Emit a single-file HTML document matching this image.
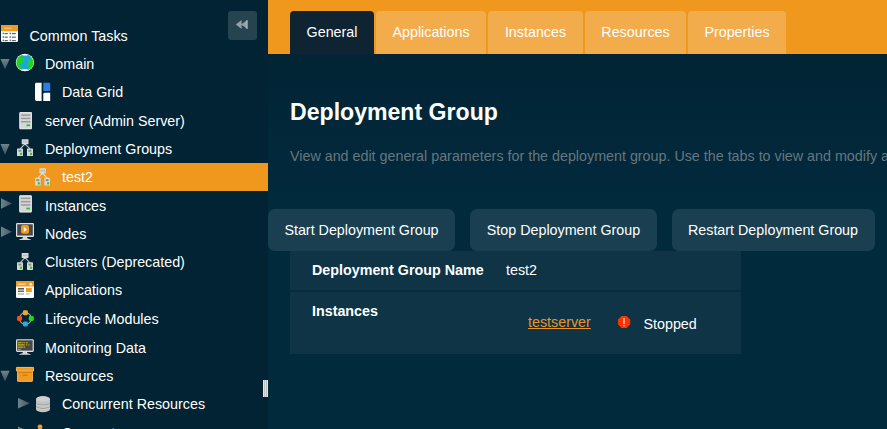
<!DOCTYPE html>
<html><head><meta charset="utf-8">
<style>
html,body{margin:0;padding:0}
body{width:887px;height:429px;overflow:hidden;position:relative;background:#012a3d;font-family:"Liberation Sans",sans-serif;font-size:14.3px;color:#fff}
#side{position:absolute;left:0;top:0;width:268px;height:429px;background:#022333;overflow:hidden}
.row{position:absolute;left:0;width:268px;height:28px;line-height:28px;white-space:nowrap}
#selbg{position:absolute;left:0;top:163px;width:268px;height:28px;background:#f0981e}
.row .t{position:absolute;top:0}
.arr{position:absolute;width:0;height:0}
.arr.d{border-left:5px solid transparent;border-right:5px solid transparent;border-top:9px solid #6d7f88}
.arr.r{border-top:5px solid transparent;border-bottom:5px solid transparent;border-left:9px solid #6d7f88}
.ico{position:absolute}
#collapse{position:absolute;left:228px;top:11px;width:29px;height:29px;background:#264350;border-radius:3px}
#grad{position:absolute;left:268px;top:54px;width:619px;height:150px;background:linear-gradient(180deg,#022434,#012a3d)}
#hdr{position:absolute;left:268px;top:0;width:619px;height:54px;background:#f0981e}
.tab{position:absolute;top:11px;height:43px;line-height:42px;background:#f3ac4c;border-radius:4px 4px 0 0;text-align:center;color:#fff}
.tab.act{background:#0e2433}
h1{position:absolute;left:290px;top:98px;margin:0;font-size:23.1px;font-weight:bold;line-height:28px;white-space:nowrap}
#desc{position:absolute;left:290px;top:147px;color:#68767d;white-space:nowrap;line-height:18px}
.btn{position:absolute;top:209px;height:42px;line-height:42px;background:#1a3f50;border-radius:7px;text-align:center;color:#fff}
#tbl{position:absolute;left:290px;top:251px;width:451px;height:102.5px;background:#0e3446}
#tbl b,#tbl span{position:absolute;line-height:18px;white-space:nowrap}
#sep{position:absolute;left:0;top:38.7px;width:451px;height:2.3px;background:#082c3d}
#lnk{color:#e8952a;text-decoration:underline}
</style></head><body>
<div id="side">
 <div id="selbg"></div>
 <div class="row" style="top:22px"><span class="t" style="left:29.5px">Common Tasks</span></div>
 <div class="row" style="top:50px"><span class="t" style="left:45px">Domain</span></div>
 <div class="row" style="top:78px"><span class="t" style="left:62px">Data Grid</span></div>
 <div class="row" style="top:107px"><span class="t" style="left:45px">server (Admin Server)</span></div>
 <div class="row" style="top:135px"><span class="t" style="left:45px">Deployment Groups</span></div>
 <div class="row" style="top:163px"><span class="t" style="left:62px">test2</span></div>
 <div class="row" style="top:192px"><span class="t" style="left:45px">Instances</span></div>
 <div class="row" style="top:220px"><span class="t" style="left:45px">Nodes</span></div>
 <div class="row" style="top:248px"><span class="t" style="left:45px">Clusters (Deprecated)</span></div>
 <div class="row" style="top:276px"><span class="t" style="left:45px">Applications</span></div>
 <div class="row" style="top:305px"><span class="t" style="left:45px">Lifecycle Modules</span></div>
 <div class="row" style="top:334px"><span class="t" style="left:45px">Monitoring Data</span></div>
 <div class="row" style="top:362px"><span class="t" style="left:45px">Resources</span></div>
 <div class="row" style="top:390px"><span class="t" style="left:62px">Concurrent Resources</span></div>
 <div class="row" style="top:419px"><span class="t" style="left:62px">Connectors</span></div>
 <div id="collapse"></div>
<svg id="icons" width="268" height="429" viewBox="0 0 268 429" style="position:absolute;left:0;top:0">
<defs>
 <linearGradient id="gd" x1="0" y1="0" x2="0" y2="1"><stop offset="0" stop-color="#70838c"/><stop offset="1" stop-color="#3f5665"/></linearGradient>
 <linearGradient id="gr" x1="0" y1="0" x2="1" y2="0"><stop offset="0" stop-color="#70838c"/><stop offset="1" stop-color="#3f5665"/></linearGradient>
 <g id="srv">
  <rect x="0" y="0" width="12.7" height="17.2" rx="1" fill="#d6d6d6"/>
  <rect x="0.6" y="0.6" width="11.5" height="16" rx="0.6" fill="none" stroke="#e6e6e6" stroke-width="0.8"/>
  <rect x="1.6" y="2.4" width="9.5" height="1.5" fill="#9a9a9a"/>
  <rect x="1.6" y="5.7" width="9.5" height="1.5" fill="#9a9a9a"/>
  <rect x="1.6" y="9" width="9.5" height="1.5" fill="#9a9a9a"/>
  <rect x="7.2" y="12.4" width="3.6" height="1.8" fill="#22cc22"/>
 </g>
 <g id="tree">
  <path d="M8 4.6 L3 9.8 M8 4.6 L13 9.8" stroke="#ffffff" stroke-opacity="0.72" stroke-width="1.1" fill="none"/>
  <rect x="4.7" y="0" width="6.8" height="5" rx="0.5" fill="#dcdcdc"/>
  <rect x="5.7" y="1.5" width="4.8" height="1.8" fill="#bdbdbd"/>
  <path d="M7 5 H9.2 L8.1 6 Z" fill="#e6e6e6"/>
  <rect x="0" y="9.2" width="6" height="7.7" rx="0.7" fill="#d8d8d8"/>
  <rect x="10" y="9.2" width="6" height="7.7" rx="0.7" fill="#d8d8d8"/>
  <rect x="1.4" y="10.6" width="3" height="1.9" fill="#8c8c8c"/>
  <rect x="11.4" y="10.6" width="3" height="1.9" fill="#8c8c8c"/>
  <rect x="2.9" y="13.6" width="2.2" height="2.2" fill="#22cc22"/>
  <rect x="12.9" y="13.6" width="2.2" height="2.2" fill="#22cc22"/>
 </g>
 <g id="mon">
  <rect x="0" y="0" width="18" height="13.8" rx="1.2" fill="#dedede"/>
  <rect x="1.2" y="1.2" width="15.6" height="11.2" fill="#474747"/>
  <path d="M7 13.8 L11 13.8 L11.6 15.4 L14.8 16.3 L14.8 17 L3.2 17 L3.2 16.3 L6.4 15.4 Z" fill="#d6d6d6"/>
 </g>
</defs>
<!-- arrows -->
<path d="M0.5 59 L9.6 59 L5 69.2 Z" fill="url(#gd)"/>
<path d="M0.5 144 L9.6 144 L5 154.7 Z" fill="url(#gd)"/>
<path d="M0.5 370.8 L9.6 370.8 L5 381.4 Z" fill="url(#gd)"/>
<path d="M1 198.3 L12 203.5 L1 208.7 Z" fill="url(#gr)"/>
<path d="M1 226.6 L12 231.8 L1 237 Z" fill="url(#gr)"/>
<path d="M18 398 L29.8 403.2 L18 408.4 Z" fill="url(#gr)"/>
<path d="M18 426.5 L29.8 431.7 L18 436.9 Z" fill="url(#gr)"/>
<!-- common tasks -->
<g transform="translate(1,25)">
 <rect x="0" y="0" width="17" height="17" rx="1.2" fill="#fff"/>
 <path d="M0 6.2 V1.2 Q0 0 1.2 0 H15.8 Q17 0 17 1.2 V6.2 Z" fill="#f29a1f"/>
 <rect x="3" y="2.6" width="7.5" height="1.4" fill="#f6c070"/>
 <g fill="#62676d">
  <rect x="1.6" y="7.6" width="1.3" height="1.6"/><rect x="3.6" y="8" width="3.2" height="1.2"/><rect x="8.6" y="7.6" width="1.3" height="1.6"/><rect x="10.8" y="8" width="4" height="1.2"/>
  <rect x="1.6" y="11.2" width="1.3" height="1.6"/><rect x="3.6" y="11.6" width="3.2" height="1.2"/><rect x="8.6" y="11.2" width="1.3" height="1.6"/><rect x="10.8" y="11.6" width="4" height="1.2"/>
  <rect x="1.6" y="14.6" width="1.3" height="1.6"/><rect x="3.6" y="15" width="3.2" height="1.2"/><rect x="8.6" y="14.6" width="1.3" height="1.6"/><rect x="10.8" y="15" width="4" height="1.2"/>
 </g>
</g>
<!-- domain globe -->
<g>
 <ellipse cx="24.9" cy="62.5" rx="9.1" ry="8.7" fill="#fff"/>
 <clipPath id="gc"><ellipse cx="24.9" cy="62.5" rx="8.6" ry="8.3"/></clipPath>
 <g clip-path="url(#gc)">
  <rect x="16" y="55.3" width="18" height="14.4" fill="#1ed61e"/>
  <path d="M21 55.3 L29.5 55.3 L31 58 L30.5 60 L28 61 L28.5 63.5 L27.5 65.5 L29 67.5 L28.5 69.7 L22 69.7 L22.5 67.5 L21 66 L19 66.5 L20 64 L22.5 62.5 L24.5 60 L23 58 L21.5 57.5 Z" fill="#1ea4e0"/>
  <circle cx="28.6" cy="59.2" r="0.8" fill="#1ed61e"/>
  <path d="M21.5 54 H28.3 L27 55.6 H22.8 Z" fill="#fff"/>
  <path d="M21.5 71 H28.3 L27.3 69.3 H22.5 Z" fill="#fff"/>
 </g>
</g>
<!-- data grid -->
<g>
 <path d="M36.4 82.8 H41.6 V101 H36.4 Q35 101 35 99.6 V84.2 Q35 82.8 36.4 82.8 Z" fill="#fff"/>
 <path d="M43.3 82.8 H48.8 Q50.2 82.8 50.2 84.2 V91 H43.3 Z" fill="#2f7de1"/>
 <path d="M44.7 92.8 H50.2 V101 H43.3 V94.2 Q43.3 92.8 44.7 92.8 Z" fill="#fff"/>
</g>
<!-- server -->
<use href="#srv" x="19.3" y="112"/>
<!-- deployment groups -->
<use href="#tree" x="17" y="139.2"/>
<!-- test2 -->
<g transform="translate(35.1,168.2) scale(0.93,1.03)"><use href="#tree"/></g>
<!-- instances -->
<use href="#srv" x="19.2" y="195.2"/>
<!-- nodes -->
<g transform="translate(16,223.1)">
 <use href="#mon"/>
 <rect x="5" y="2" width="8" height="8.6" rx="2" fill="#f29a1f"/>
 <path d="M7.8 3.8 L11 6.3 L7.8 8.8 Z" fill="#fff"/>
</g>
<!-- clusters -->
<use href="#tree" x="17" y="253"/>
<!-- applications -->
<g transform="translate(16,281)">
 <rect x="0" y="0" width="18" height="17" rx="1.3" fill="#fff"/>
 <path d="M0 5.6 V1.3 Q0 0 1.3 0 H16.7 Q18 0 18 1.3 V5.6 Z" fill="#f29a1f"/>
 <rect x="1.6" y="2.4" width="8" height="1.5" fill="#f9d29a"/>
 <circle cx="14.8" cy="3.2" r="1.3" fill="#fff"/>
 <rect x="2" y="7" width="6" height="1.6" fill="#5a5a5a"/>
 <rect x="2" y="9.5" width="6" height="1.5" fill="#6a6a6a"/>
 <rect x="2" y="12.2" width="6" height="1.5" fill="#b5b5b5"/>
 <rect x="10" y="7" width="5.8" height="4" fill="#f29a1f"/>
 <rect x="10" y="12.2" width="3.6" height="1.5" fill="#c5c5c5"/>
</g>
<!-- lifecycle -->
<g>
 <circle cx="25.4" cy="318.5" r="5.9" fill="none" stroke="#97a3a8" stroke-width="1.2"/>
 <rect x="22.9" y="310.3" width="5" height="4.9" rx="1.4" fill="#f5a623"/>
 <rect x="17" y="316" width="5" height="5" rx="1.4" fill="#f4511e"/>
 <rect x="28.8" y="316" width="5" height="5" rx="1.4" fill="#1ed81e"/>
 <rect x="22.9" y="321.6" width="5" height="4.9" rx="1.4" fill="#29a9e6"/>
</g>
<!-- monitoring -->
<g transform="translate(16,339.2) scale(0.99,0.92)">
 <use href="#mon"/>
 <g fill="#d6c312" opacity="0.78">
  <rect x="2" y="3.1" width="3" height="1.4"/><rect x="5.6" y="3.1" width="1.2" height="1.4"/><rect x="7.6" y="3.1" width="1.2" height="1.4"/><rect x="10" y="3.1" width="1.8" height="1.4"/>
  <rect x="2" y="5.4" width="6.8" height="1.5"/><rect x="10" y="5.4" width="1.2" height="1.5" opacity="0.8"/><rect x="11.8" y="5.4" width="2" height="1.5" opacity="0.6"/>
  <rect x="2" y="7.9" width="5" height="1.5"/><rect x="7.6" y="7.9" width="1.6" height="1.5"/>
  <rect x="2" y="10.4" width="2.8" height="1.3"/>
 </g>
</g>
<!-- resources -->
<g>
 <path d="M17.2 371.4 H32.8 V380.7 Q32.8 381.7 31.8 381.7 H18.2 Q17.2 381.7 17.2 380.7 Z" fill="#f29a1f"/>
 <path d="M17.6 371.4 V380.7 Q17.6 381.3 18.2 381.3 H31.8 Q32.4 381.3 32.4 380.7 V371.4" fill="none" stroke="#f8bd66" stroke-width="0.8"/>
 <rect x="17.9" y="371.4" width="14.2" height="1.6" fill="#cf8212"/>
 <rect x="16" y="367" width="18" height="4.4" rx="1" fill="#f29a1f"/>
 <rect x="16.4" y="367.4" width="17.2" height="3.6" rx="0.8" fill="none" stroke="#f8bd66" stroke-width="0.8"/>
 <rect x="22.4" y="374.6" width="5.2" height="1.2" fill="#c97a10"/>
</g>
<!-- concurrent db -->
<g>
 <path d="M36 399 A7 3 0 0 1 50 399 V409.2 A7 3 0 0 1 36 409.2 Z" fill="#c3c3c3"/>
 <ellipse cx="43" cy="399" rx="6.6" ry="2.5" fill="#cfcfcf"/>
 <path d="M36 402.4 A7 2.2 0 0 0 50 402.4 V403.4 A7 2.2 0 0 1 36 403.4Z" fill="#999"/>
 <path d="M36 405.8 A7 2.2 0 0 0 50 405.8 V406.8 A7 2.2 0 0 1 36 406.8Z" fill="#9c9c9c"/>
 <path d="M36 403.4 A7 2.2 0 0 0 50 403.4 V404.2 A7 2.2 0 0 1 36 404.2Z" fill="#d2d2d2"/>
 <path d="M36 406.8 A7 2.2 0 0 0 50 406.8 V407.6 A7 2.2 0 0 1 36 407.6Z" fill="#cdcdcd"/>
</g>
<!-- connectors -->
<circle cx="40" cy="426.9" r="2.4" fill="#f29a1f"/><rect x="39.3" y="427" width="1.4" height="3" fill="#f29a1f"/>
<!-- collapse -->
<path d="M241.6 20 V29 L235.8 24.5 Z M247.4 20 V29 L241 24.5 Z" fill="#93a1a7"/><rect x="246.6" y="20" width="0.8" height="9" fill="#c2cacd"/>
<!-- splitter handle -->
<rect x="263" y="380" width="5.2" height="17" fill="#e8e8e8"/>
<rect x="264.3" y="380" width="0.8" height="17" fill="#b0b0b0"/>
<rect x="266" y="380" width="0.8" height="17" fill="#b0b0b0"/>
</svg>
</div>
<div id="grad"></div>
<div id="hdr"></div>
<div class="tab act" style="left:290px;width:84px">General</div>
<div class="tab" style="left:376px;width:110px">Applications</div>
<div class="tab" style="left:488px;width:95px">Instances</div>
<div class="tab" style="left:585px;width:101px">Resources</div>
<div class="tab" style="left:688px;width:98px">Properties</div>
<h1>Deployment Group</h1>
<div id="desc">View and edit general parameters for the deployment group. Use the tabs to view and modify a deployment group.</div>
<div class="btn" style="left:268px;width:187px">Start Deployment Group</div>
<div class="btn" style="left:470px;width:187px">Stop Deployment Group</div>
<div class="btn" style="left:672px;width:202px;padding-right:1px">Restart Deployment Group</div>
<div id="tbl"><div id="sep"></div>
<b style="left:22px;top:10px">Deployment Group Name</b><span style="left:216px;top:10px">test2</span>
<b style="left:22px;top:51px">Instances</b><span id="lnk" style="left:238px;top:62px">testserver</span><span style="left:353.5px;top:64px">Stopped</span>
<svg width="14" height="14" viewBox="0 0 14 14" style="position:absolute;left:327px;top:64px"><path d="M4.6 1 H9.6 L13.2 4.6 V9.5 L9.6 13.1 H4.6 L1 9.5 V4.6 Z" fill="#ff3300"/><rect x="6" y="3" width="1.9" height="6" fill="#ffab94"/><rect x="6" y="9.8" width="1.9" height="1.5" fill="#ff9a80"/></svg>
</div>
</body></html>
